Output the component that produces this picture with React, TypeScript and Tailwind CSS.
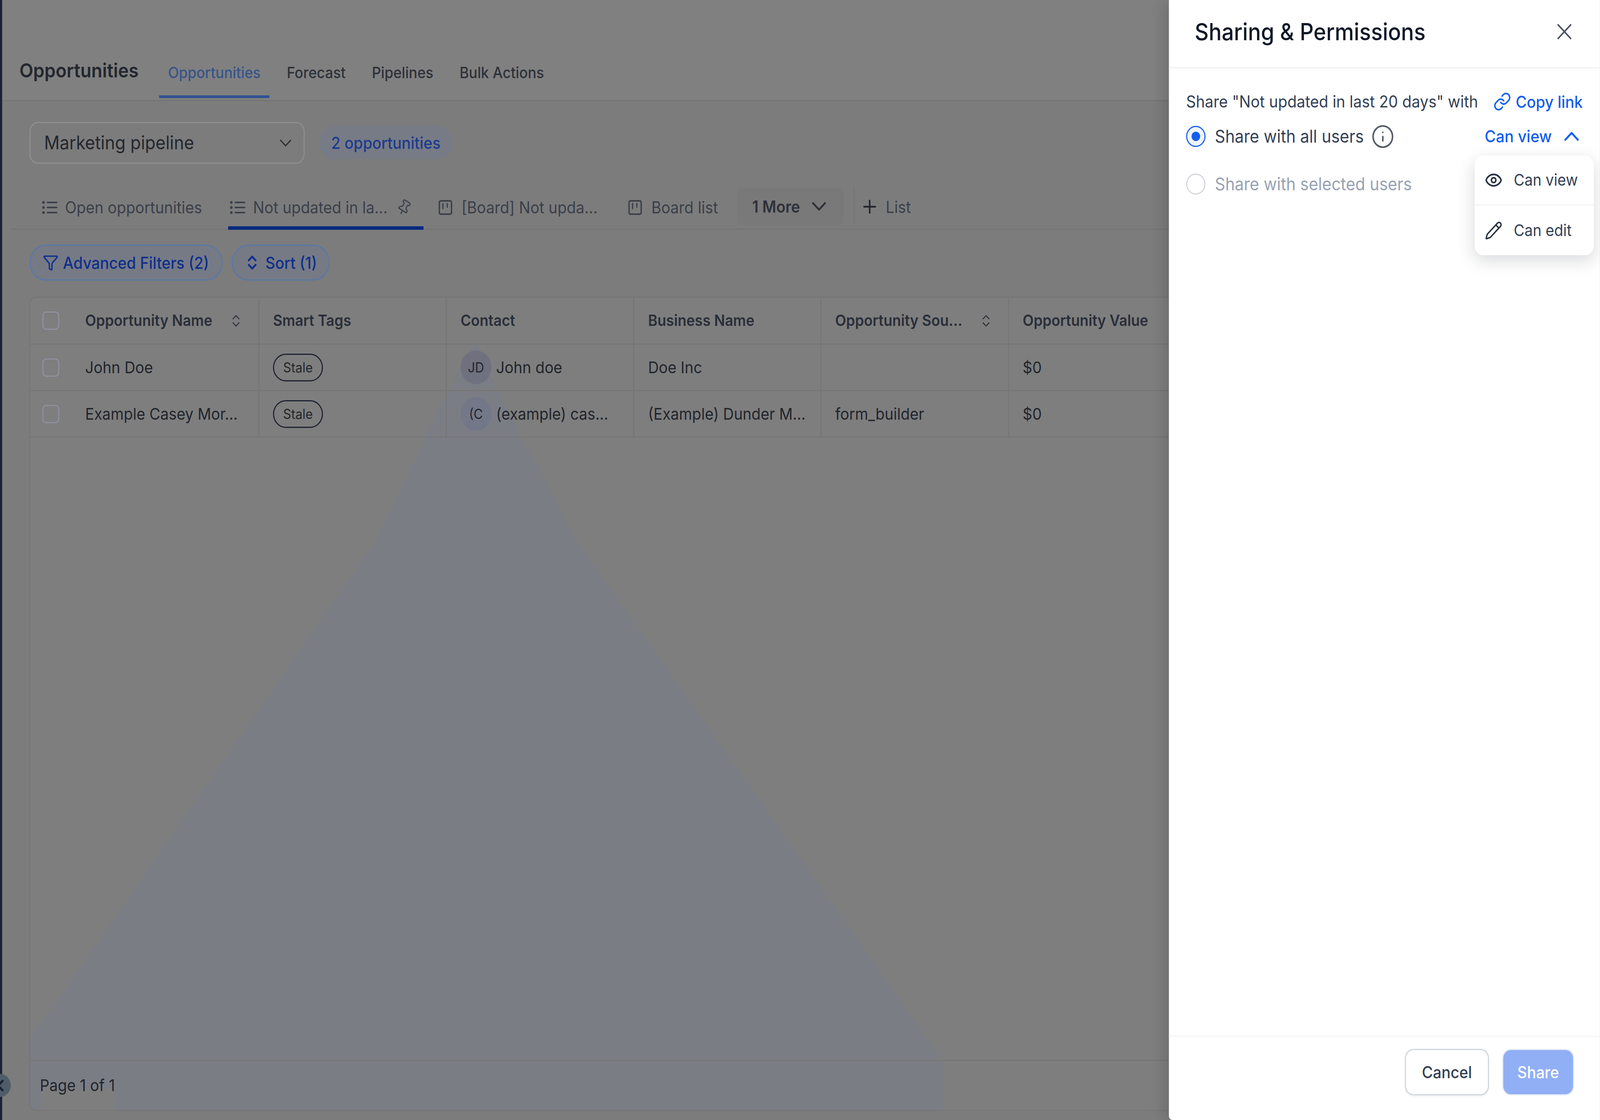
import React from 'react';
import {
  ChevronDown,
  ChevronLeft,
  ChevronUp,
  ChevronsUpDown,
  Eye,
  Funnel,
  Info,
  Link,
  Pencil,
  Pin,
  Plus,
  X,
} from 'lucide-react';

const rows = [
  { name: 'John Doe', initials: 'JD', contact: 'John doe', business: 'Doe Inc', source: '', value: '$0', avatar: 'bg-[#6f717f]' },
  { name: 'Example Casey Mor...', initials: '(C', contact: '(example) cas...', business: '(Example) Dunder M...', source: 'form_builder', value: '$0', avatar: 'bg-[#727888]' },
];

const ListIcon = () => (
  <svg width="43" height="36" viewBox="0 0 43 36" fill="#3b3f49" stroke="#3b3f49" strokeWidth="4" strokeLinecap="round" className="shrink-0">
    <path d="M15 5h26M15 18h26M15 31h26" />
    <circle cx="4" cy="5" r="1.6" />
    <circle cx="4" cy="18" r="1.6" />
    <circle cx="4" cy="31" r="1.6" />
  </svg>
);

const BoardIcon = () => (
  <svg width="38" height="38" viewBox="0 0 38 38" fill="none" stroke="#3b3f49" strokeWidth="4" strokeLinecap="round" className="shrink-0">
    <rect x="2" y="2" width="34" height="34" rx="4" />
    <path d="M12 9v13M24 9v9" strokeWidth="3.5" />
  </svg>
);

const Cell = ({ children, border = true }: { children?: React.ReactNode; border?: boolean }) => (
  <div className={`flex items-center px-[38px] ${border ? 'border-r-[3px] border-[#767676]' : ''}`}>{children}</div>
);

const Checkbox = () => <div className="w-[47px] h-[47px] -ml-[4px] rounded-[11px] border-[3px] border-[#8f91a0] shrink-0" />;

const App: React.FC = () => {
  return (
    <div className="relative flex w-[4454px] h-[2866px] origin-top-left scale-x-[0.9196] overflow-hidden bg-[#7c7c7c] font-[Inter,sans-serif] text-[42px]">
      <main className="w-[3254px] h-full shrink-0 border-l-[6px] border-[#1a2236] overflow-hidden">
        {/* top bar */}
        <header className="flex items-end h-[259px] bg-[#808080] border-b-[3px] border-[#747474] pl-[48px]">
          <h1 className="text-[50px] leading-[60px] font-semibold text-[#24272e] pb-[46px]">Opportunities</h1>
          <nav className="flex gap-[23px] ml-[57px] mb-[5px] text-[39.5px] leading-[50px] font-medium text-[#2e3138]">
            <a className="px-[25px] pb-[33px] border-b-[7px] border-[#2f5290] text-[#375488]">Opportunities</a>
            <a className="px-[25px] pb-[33px] border-b-[7px] border-transparent">Forecast</a>
            <a className="px-[25px] pb-[33px] border-b-[7px] border-transparent">Pipelines</a>
            <a className="px-[25px] pb-[33px] border-b-[7px] border-transparent">Bulk Actions</a>
          </nav>
        </header>

        {/* pipeline select */}
        <div className="flex items-center ml-[76px] mt-[53px]">
          <div className="flex items-center justify-between w-[766px] h-[107px] rounded-[24px] border-[3px] border-[#8e8e92] pl-[38px] pr-[22px] text-[#24272e] text-[47.8px]">
            Marketing pipeline
            <ChevronDown size={56} strokeWidth={1.4} color="#2c3038" />
          </div>
          <div className="flex items-center h-[85px] ml-[40px] px-[34px] rounded-full bg-[#777b85] font-medium text-[#1c3a8f]">2 opportunities</div>
        </div>

        {/* saved views */}
        <div className="flex items-stretch h-[116px] ml-[24px] mt-[53px] pl-[87px] border-b-[3px] border-[#757575] text-[#3b3f49]">
          <div className="flex items-center gap-[21px] pt-[10px] -mb-[3px] border-b-[9px] border-transparent">
            <ListIcon />
            Open opportunities
          </div>
          <div className="flex items-center gap-[21px] ml-[73px] pl-[5px] pr-[33px] pt-[10px] -mb-[3px] border-b-[9px] border-[#072a7d]">
            <ListIcon />
            Not updated in la...
            <Pin size={42} strokeWidth={1.8} className="rotate-[30deg] ml-[4px]" />
          </div>
          <div className="flex items-center gap-[26px] ml-[42px] pt-[10px] -mb-[3px] border-b-[9px] border-transparent">
            <BoardIcon />
            [Board] Not upda...
          </div>
          <div className="flex items-center gap-[26px] ml-[86px] pt-[10px] -mb-[3px] border-b-[9px] border-transparent">
            <BoardIcon />
            Board list
          </div>
          <div className="flex items-center self-start mt-[8px] w-[296px] h-[96px] ml-[53px] pl-[42px] gap-[19px] rounded-[14px] bg-[#797979] font-semibold text-[#2e3138]">
            1 More
            <ChevronDown size={68} strokeWidth={1.7} />
          </div>
          <div className="self-start mt-[8px] h-[96px] ml-[28px] border-l-[3px] border-[#767676]" />
          <div className="flex items-center gap-[18px] ml-[15px] pt-[10px] pb-[9px]">
            <Plus size={54} strokeWidth={1.9} color="#22252c" />
            List
          </div>
        </div>

        {/* filters */}
        <div className="flex gap-[25px] ml-[76px] mt-[38px] text-[#0e2f8c] font-medium">
          <button className="flex items-center gap-[12px] w-[538px] h-[92px] pl-[34px] rounded-full border-[3px] border-[#5a77a8] bg-[#767a85]">
            <Funnel size={44} strokeWidth={2} />
            Advanced Filters (2)
          </button>
          <button className="flex items-center gap-[14px] w-[273px] h-[92px] pl-[31px] rounded-full border-[3px] border-[#5a77a8] bg-[#767a85]">
            <ChevronsUpDown size={46} strokeWidth={2.6} />
            Sort (1)
          </button>
        </div>

        {/* table */}
        <section className="relative flex flex-col w-[3240px] h-[2084px] ml-[75px] mt-[41px] bg-[#7e7e7e] rounded-[20px] border-[3px] border-[#767676] overflow-hidden text-[41.6px] text-[#22252c]">
          <svg className="absolute -left-[3px] -top-[3px]" width="3240" height="2084" fill="#7b7d85">
            <path d="M1245 111 L1166 241 L968 621 L79 1801 L0 1901 L0 2084 L32 2084 L32 2026 L239 2026 L239 2084 L2544 2084 L2544 1956 L1522 621 L1303 241 Z" />
          </svg>
          <div className="relative grid grid-cols-[638px_522px_522px_521px_522px_522px] h-[120px] border-b-[3px] border-[#767676] text-[39.7px] font-semibold text-[#2a2e38]">
            <Cell>
              <Checkbox />
              <span className="ml-[72px] whitespace-nowrap">Opportunity Name</span>
              <ChevronsUpDown size={40} strokeWidth={1.5} className="ml-[46px] shrink-0" />
            </Cell>
            <Cell>Smart Tags</Cell>
            <Cell>Contact</Cell>
            <Cell>Business Name</Cell>
            <Cell>
              <span className="whitespace-nowrap">Opportunity Sou...</span>
              <ChevronsUpDown size={40} strokeWidth={1.5} className="ml-[46px] shrink-0" />
            </Cell>
            <Cell border={false}>Opportunity Value</Cell>
          </div>
          {rows.map((row) => (
            <div key={row.name} className="relative grid grid-cols-[638px_522px_522px_521px_522px_522px] h-[119px] border-b-[3px] border-[#767676]">
              <Cell>
                <Checkbox />
                <span className="ml-[72px] whitespace-nowrap">{row.name}</span>
              </Cell>
              <Cell>
                <span className="flex items-center justify-center w-[139px] h-[71px] rounded-full border-[3px] border-[#1e2230] text-[35px]">Stale</span>
              </Cell>
              <div className="flex items-center pl-[38px] border-r-[3px] border-[#767676] whitespace-nowrap">
                <span className={`flex items-center justify-center w-[86px] h-[86px] mr-[13px] rounded-full text-[35px] shrink-0 ${row.avatar}`}>{row.initials}</span>
                {row.contact}
              </div>
              <Cell><span className="whitespace-nowrap">{row.business}</span></Cell>
              <Cell>{row.source}</Cell>
              <Cell border={false}>{row.value}</Cell>
            </div>
          ))}
          <div className="relative flex items-center h-[128px] mt-auto border-t-[3px] border-[#767676] pl-[27px]">Page 1 of 1</div>
        </section>
      </main>

      {/* collapsed sidebar toggle */}
      <div className="absolute left-[-29px] top-[2748px] flex items-center justify-center w-[59px] h-[59px] rounded-full bg-[#4f5d68]">
        <ChevronLeft size={48} strokeWidth={3} color="#1a2236" />
      </div>

      {/* sharing drawer */}
      <aside className="relative flex flex-col w-[1200px] h-full shrink-0 bg-white rounded-bl-[10px] shadow-[-12px_0_40px_rgba(0,0,0,0.14)]">
        <div className="flex items-center justify-between h-[175px] pl-[72px] pr-[64px] pb-[10px] border-b-[3px] border-[#f0f1f3]">
          <h2 className="text-[60px] font-medium text-[#101828]">Sharing &amp; Permissions</h2>
          <X size={70} strokeWidth={1.4} color="#4f5562" />
        </div>
        <div className="flex-1 px-[48px] pt-[56px]">
          <div className="flex items-center justify-between h-[58px] text-[42.4px] text-[#344054]">
            Share "Not updated in last 20 days" with
            <span className="flex items-center gap-[12px] text-[42px] text-[#155eef] font-medium">
              <Link size={50} strokeWidth={1.9} />
              Copy link
            </span>
          </div>
          <div className="flex items-center h-[54px] mt-[33px] text-[45px] text-[#344054]">
            <span className="flex items-center justify-center w-[54px] h-[54px] rounded-full border-[3px] border-[#155eef] bg-[#eff4ff] shrink-0">
              <span className="w-[24px] h-[24px] rounded-full bg-[#155eef]" />
            </span>
            <span className="ml-[26px]">Share with all users</span>
            <Info size={65} strokeWidth={1.6} color="#555b68" className="ml-[20px]" />
            <span className="flex items-center gap-[20px] ml-auto -mr-[4px] text-[42.5px] text-[#155eef] font-medium">
              Can view
              <ChevronUp size={70} strokeWidth={1.8} />
            </span>
          </div>
          <div className="flex items-center h-[54px] mt-[68px] text-[45px] text-[#98a2b3]">
            <span className="w-[54px] h-[54px] rounded-full border-[3px] border-[#d0d5dd] shrink-0" />
            <span className="ml-[26px]">Share with selected users</span>
          </div>
        </div>
        <div className="flex items-center justify-end gap-[37px] h-[216px] pr-[72px] pb-[32px] border-t-[3px] border-[#f2f4f7] font-medium">
          <button className="w-[234px] h-[119px] rounded-[24px] border-[3px] border-[#d0d5dd] text-[#344054] shadow-[0_3px_6px_rgba(16,24,40,0.06)]">Cancel</button>
          <button className="w-[200px] h-[119px] rounded-[24px] border-[3px] border-[#e4e9f5] bg-[#91aff5] text-white">Share</button>
        </div>

        {/* permission menu */}
        <div className="absolute left-[851px] top-[398px] w-[332px] h-[255px] rounded-[24px] bg-white shadow-[0_14px_44px_rgba(16,24,40,0.16)] text-[41px] text-[#344054]">
          <div className="flex items-center gap-[31px] h-[128px] pl-[28px] border-b-[3px] border-[#f2f4f7]">
            <Eye size={50} strokeWidth={2} color="#26303f" />
            Can view
          </div>
          <div className="flex items-center gap-[31px] h-[127px] pl-[28px]">
            <Pencil size={50} strokeWidth={1.8} color="#26303f" />
            Can edit
          </div>
        </div>
      </aside>
    </div>
  );
};

export default App;
